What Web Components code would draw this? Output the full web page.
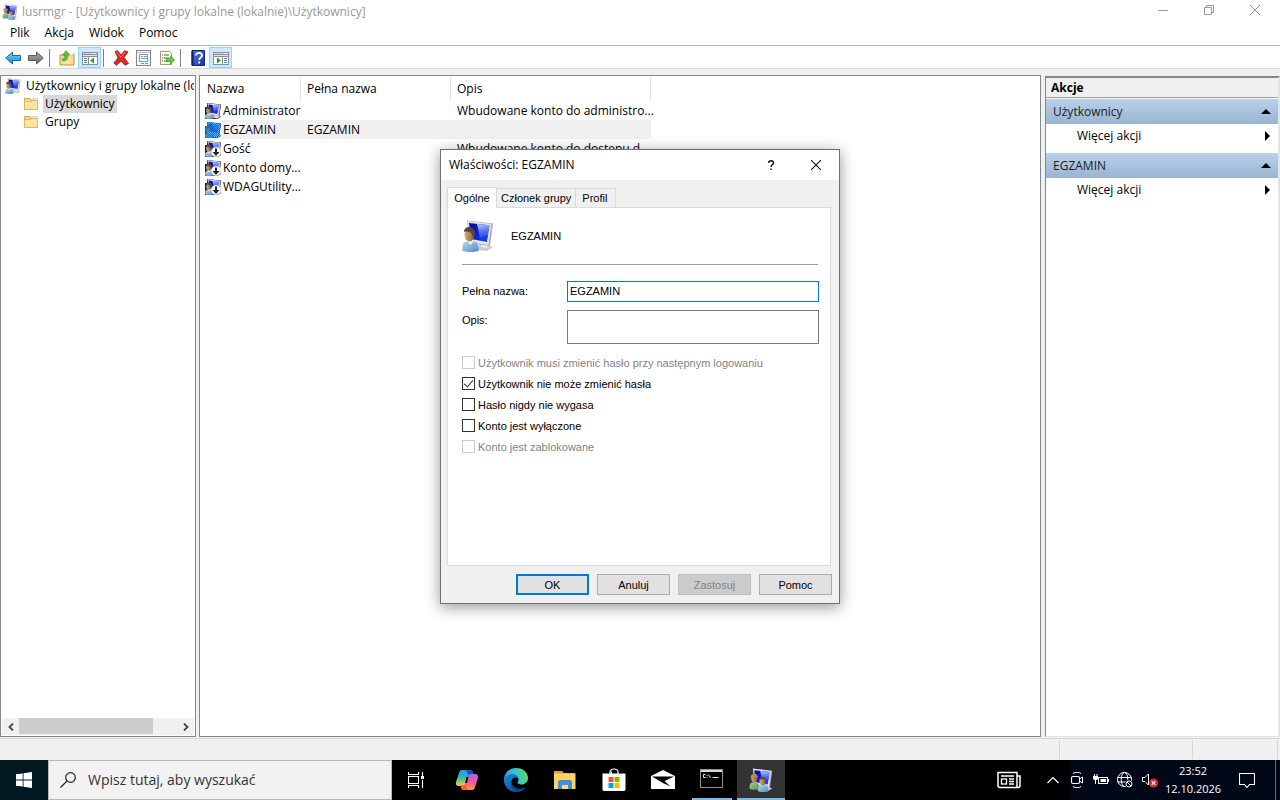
<!DOCTYPE html>
<html lang="pl">
<head>
<meta charset="utf-8">
<title>lusrmgr</title>
<style>
html, body { margin: 0; height: 100%; }
body { font: 12px/16px "Open Sans", "Noto Sans", sans-serif; color: #000; background: #f0f0f0; overflow: hidden; }
</style>
</head>
<body>
<desktop-screen></desktop-screen>
<script>
const MONITOR = `
<defs>
<linearGradient id="scr" x1="0" y1="0" x2="1" y2="1"><stop offset="0" stop-color="#0408a0"/><stop offset=".5" stop-color="#0d1fd8"/><stop offset="1" stop-color="#1c50f0"/></linearGradient>
<linearGradient id="shine" x1=".3" y1="0" x2=".5" y2="1"><stop offset="0" stop-color="#b4caff"/><stop offset="1" stop-color="#3a5cf0" stop-opacity=".5"/></linearGradient>
<linearGradient id="skin" x1="0" y1="0" x2="1" y2="0"><stop offset="0" stop-color="#dba877"/><stop offset="1" stop-color="#83603f"/></linearGradient>
<linearGradient id="shirt" x1="0" y1="0" x2="1" y2="1"><stop offset="0" stop-color="#b5dcf6"/><stop offset="1" stop-color="#5488bd"/></linearGradient>
<linearGradient id="green" x1="0" y1="0" x2="1" y2="1"><stop offset="0" stop-color="#a9d69a"/><stop offset="1" stop-color="#4d8a45"/></linearGradient>
</defs>
<path d="M17 24l8 1 6 2-6 4-9-1z" fill="#c9cbce"/><path d="M20 24l6 1-1 3-6-1z" fill="#e9eaec"/>
<path d="M5 .5l26 3-3 22.500L8 23z" fill="#a9acb2"/><path d="M5.500 1l24 3-3 21L8 22z" fill="#e2e4e8"/>
<path d="M7 3l20.500 2.300L25 22 9 19z" fill="url(#scr)"/><path d="M15 4l12.500 1.300L26 15l-8 3z" fill="url(#shine)"/>`;
const PERSON = `
<path d="M.5 31c-1-6 1-10 6-10h3c5 0 8 4 7 10-4 1.500-12 1.500-16 0z" fill="url(#shirt)"/><path d="M5 21l3.500 4 3-4-1-2H6z" fill="#f0f6fa"/>
<ellipse cx="7.500" cy="15" rx="5" ry="6.500" fill="url(#skin)"/><path d="M2 12c0-7 11.500-7 11 2l-1 5c-1.500-1-1.500-4-3-6.500C6.500 12 4 11 2 12z" fill="#57473a"/>`;
const PAIR = `
<path d="M1 28c-1-6 1-9 5-9h2c4 0 6 3 6 9-4 1.500-9 1.500-13 0z" fill="url(#green)"/><ellipse cx="7" cy="14" rx="4" ry="5" fill="url(#skin)"/><path d="M2 13c0-7 10-7 10 0-3-2-7-2-10 0z" fill="#b6923e"/>
<path d="M12 31c-1-6 2-9 6-9h2c4 0 6 3 6 9-4 1.500-10 1.500-14 0z" fill="url(#shirt)"/><ellipse cx="18" cy="18" rx="4" ry="5" fill="url(#skin)"/><path d="M13 16c0-6 10-6 10 0-3-2-6-1-10 0z" fill="#6e4527"/>`;
const SHADOW = `<path d="M4 0l28 3-3 22 3 3-7 4H0V8h4z" fill="#1b1b2b"/>`;
const PANEWIN = `<rect x="0" y="2" width="16" height="13" fill="#8a9099"/><rect x="1" y="3" width="14" height="1" fill="#cfd4da"/><rect x="11" y="3" width="3" height="1" fill="#fff"/><rect x="1" y="5" width="14" height="1" fill="#dfe3e8"/>`;
const ICONS = {
  user: [32, MONITOR + PERSON],
  group: [32, MONITOR + PAIR],
  listuser: [32, SHADOW + MONITOR + PERSON],
  disabled: [32, SHADOW + MONITOR + PERSON + `<circle cx="22" cy="22" r="10" fill="#fff" stroke="#999" stroke-width="1"/><path d="M20 15h4v7h5l-7 8-7-8h5z" fill="#222"/>`],
  selected: [32, `<defs><pattern id="dither" width="4" height="4" patternUnits="userSpaceOnUse"><path d="M0 0h2v2H0zM2 2h2v2H2z" fill="#0078d7"/></pattern></defs>` + SHADOW + MONITOR + PERSON + `<path d="M4 0l28 3-3 22 3 3-7 4H0V8h4z" fill="#1c8ae6" opacity=".45"/><path d="M4 0l28 3-3 22 3 3-7 4H0V8h4z" fill="url(#dither)"/>`],
  folder: [16, `<path d="M1 2h6l1 1.500h6.500V14H1z" fill="#d9ac4c"/><path d="M2 3h4.500l1 1.500H14V13H2z" fill="#f7d98a"/><path d="M1.500 5.500h7l1-1h5v9h-13z" fill="#fbe3a2" stroke="#dcb45c" stroke-width=".8"/><path d="M10 2.500h4.500v2H10z" fill="#eef4fa" stroke="#c9a557" stroke-width=".5"/>`],
  back: [16, `<defs><linearGradient id="bk" x1="0" y1="0" x2="0" y2="1"><stop offset="0" stop-color="#7fd6f8"/><stop offset="1" stop-color="#1187d4"/></linearGradient></defs><path d="M.7 8L7.500 2v3.500h8v5h-8V14z" fill="url(#bk)" stroke="#1b6aa8" stroke-width="1"/>`],
  forward: [16, `<defs><linearGradient id="fw" x1="0" y1="0" x2="0" y2="1"><stop offset="0" stop-color="#aaa"/><stop offset="1" stop-color="#6c6c6c"/></linearGradient></defs><path d="M15.300 8L8.500 2v3.500h-8v5h8V14z" fill="url(#fw)" stroke="#5c5c5c" stroke-width="1"/>`],
  up: [16, `<path d="M1 5h6l1-1h7v11H1z" fill="#f3d283" stroke="#c9983a"/><path d="M2 7h12v7H2z" fill="#fbe09a"/><path d="M10 3h4v2h-4z" fill="#eef"/><path d="M4 11c4 0 5-3 4.500-6h2L7 .7 3.500 5H5.800c.2 3-.8 4-2.800 4z" fill="#57c82e" stroke="#2c8a14" stroke-width=".6"/>`],
  panetree: [16, PANEWIN + `<rect x="1" y="7" width="5" height="7" fill="#fff"/><rect x="7" y="7" width="8" height="7" fill="#fff"/><path d="M2 8h3v1H2zM2 10h3v1H2zM2 12h3v1H2z" fill="#4a7fb5"/><path d="M8 10.500L12 7.500v6z" fill="#24a51c"/>`],
  paneact: [16, PANEWIN + `<rect x="10" y="7" width="5" height="7" fill="#fff"/><rect x="1" y="7" width="8" height="7" fill="#fff"/><path d="M11 8h3v1h-3zM11 10h3v1h-3zM11 12h3v1h-3z" fill="#4a7fb5"/><path d="M8 10.500L4 7.500v6z" fill="#24a51c"/>`],
  remove: [16, `<path d="M2 1.500l2.500-.8L8 5l3.500-4.300L15 2l-4 5.500 4.500 6-3.500 1.800L8 11l-4.500 4.300L.8 13 5 8z" fill="#e02727" stroke="#a80f12" stroke-width=".8"/><path d="M3 2.200l5 5 4-5" fill="none" stroke="#f58a83" stroke-width=".9"/>`],
  props: [16, `<rect x=".5" y=".5" width="14" height="15" fill="#f4f6f8" stroke="#7f8790"/><path d="M1 2.500h13" stroke="#b9c0c8"/><rect x="3.500" y="4.500" width="8" height="7" fill="#fff" stroke="#8b98a6"/><path d="M5 6.500h2M8 6.500h3M5 8.500h6" stroke="#48b4de"/><path d="M5 13.500h3M9 13.500h3" stroke="#3aa9dc"/>`],
  export: [16, `<path d="M1.500 1.500h9l2 2v11h-11z" fill="#fffbe8" stroke="#a59c74"/><path d="M3 5h1M5 5h5M3 8h1M5 8h5M3 11h1M5 11h4" stroke="#555"/><path d="M7.500 8.500h4V6l4.300 4-4.300 4v-2.500h-4z" fill="#62cd3d" stroke="#2f9418" stroke-width=".6"/>`],
  help: [16, `<defs><linearGradient id="hp" x1="0" y1="0" x2="1" y2="1"><stop offset="0" stop-color="#5577dd"/><stop offset="1" stop-color="#1b35a5"/></linearGradient></defs><path d="M2 .5h12.500v15H2z" fill="url(#hp)" stroke="#14267c"/><path d="M2.500 1v14" stroke="#0f2071" stroke-width="2"/><path d="M6 5.500c0-3.500 6-3.500 6 0 0 2.200-2.800 2-2.800 4.500M9.200 11.500v2" fill="none" stroke="#fff" stroke-width="1.800"/>`],
  min: [10, `<path d="M0 5.500h10" stroke="#999"/>`],
  max: [10, `<path d="M.5 2.500h7v7h-7zM2.500 2.500v-2h7v7h-2" fill="none" stroke="#999"/>`],
  close: [10, `<path d="M0 0l10 10M10 0L0 10" stroke="#999"/>`],
  dlgclose: [10, `<path d="M0 0l10 10M10 0L0 10" stroke="#111" stroke-width="1.100"/>`],
  dlghelp: [10, `<path d="M2.500 3c0-3 5-3 5 0 0 1.800-2.500 1.800-2.500 4M5 8.500v1.500" fill="none" stroke="#111" stroke-width="1.400"/>`],
  left: [8, `<path d="M6 .5L2.500 4 6 7.500" fill="none" stroke="#444" stroke-width="1.800"/>`],
  right: [8, `<path d="M2 .5L5.500 4 2 7.500" fill="none" stroke="#444" stroke-width="1.800"/>`],
  tri: [10, `<path d="M5 2l5 5H0z"/>`],
  arrow: [10, `<path d="M3 0l5 5-5 5z"/>`],
  windows: [16, `<path d="M0 2.300L6.700 1.400v6.200H0zM7.500 1.300L16 0v7.600H7.500zM0 8.400h6.700v6.200L0 13.700zM7.500 8.400H16V16l-8.500-1.300z" fill="#fff"/>`],
  search: [16, `<circle cx="10.500" cy="5.500" r="4.800" fill="none" stroke="#222" stroke-width="1.200"/><path d="M7 9L.5 15.500" stroke="#222" stroke-width="1.300"/>`],
  taskview: [16, `<path d="M.5 0v2.500h10V0M.5 16v-2.500h10V16M.5 4.500h10v7H.5zM14.500 0v4M14.500 8v8" fill="none" stroke="#fff" stroke-width="1.100"/><rect x="13" y="4" width="3" height="3" fill="#fff"/>`],
  copilot: [24, `<defs><linearGradient id="c1" x1="0" y1="0" x2="0" y2="1"><stop offset="0" stop-color="#1f9df0"/><stop offset=".5" stop-color="#35b9a0"/><stop offset="1" stop-color="#ffd02b"/></linearGradient><linearGradient id="c2" x1="0" y1="0" x2="0" y2="1"><stop offset="0" stop-color="#b45ce8"/><stop offset=".5" stop-color="#ef5a9b"/><stop offset="1" stop-color="#ff9a4a"/></linearGradient></defs>
<path d="M7 2h8c2 0 2.500 1 3 3l.5 2h-3c-2 0-2.500 1-3 3l-1.500 5c-.6 2-1 3-3 3H4c-3 0-3.500-2-2.700-5L4 5c.6-2 1-3 3-3z" fill="url(#c1)"/><path d="M11 2h4c2 0 2.500 1 3 3l.5 2h-3c-2 0-2.500 0-3-2z" fill="#154fc4"/>
<path d="M17 22H9c-2 0-2.500-1-3-3l-.5-2h3c2 0 2.500-1 3-3L13 9c.6-2 1-3 3-3h4c3 0 3.500 2 2.700 5L20 19c-.6 2-1 3-3 3z" fill="url(#c2)"/><path d="M13 22H9c-2 0-2.500-1-3-3l-.5-2h3c2 0 2.500 0 3 2z" fill="#f2662f"/><path d="M11.500 9h2l-1.500 6h-2z" fill="#111"/>`],
  edge: [24, `<defs><linearGradient id="e1" x1="0" y1=".5" x2="1" y2=".3"><stop offset="0" stop-color="#2ba7ea"/><stop offset=".5" stop-color="#31c3d0"/><stop offset="1" stop-color="#66dd50"/></linearGradient><linearGradient id="e2" x1="0" y1="0" x2=".6" y2="1"><stop offset="0" stop-color="#1684d8"/><stop offset="1" stop-color="#0c59a4"/></linearGradient></defs>
<path d="M0 12C0 5 5.500 0 12 0c7.500 0 12 5 12 10 0 4-3 6.500-6.500 6.500-2.500 0-4-1-4-2 0-.8 1-1.200 1-3C14.500 9 12 7 9 7c-5 0-9 3-9 7z" fill="url(#e1)"/><path d="M0 12c.5-4 4.500-6 8.500-6 3.500 0 6 2.500 6 5.300-.5-1-1.500-1.800-3-1.800-3 0-4 2.500-4 4.500 0 4 4 7 8 7 3 0 5-1 6.500-2C20 22 16 24 12 24 5 24 0 18.500 0 12z" fill="url(#e2)"/><path d="M7.500 14c0 4 4 7 8 7 3 0 5-1 6.500-2-2 3-5 4.600-8.500 5C9 23 5 18 7.500 14z" fill="#0a4788"/>`],
  explorer: [24, `<path d="M1 3h8l2 2h11v16H1z" fill="#e39e1c"/><path d="M1 5.500h21.500V21H1z" fill="#ffd265"/><path d="M5 21v-7c0-1 1-2 2-2h10c1 0 2 1 2 2v7h-4v-4H9v4z" fill="#3e91d8"/><path d="M9 17h6v4H9z" fill="#ffda79"/>`],
  store: [24, `<path d="M8 6V4c0-4 8-4 8 0v2M9.500 6V3.500" fill="none" stroke="#fff" stroke-width="1.200"/><path d="M.5 5.500h23V21c0 1.500-.8 2-2 2h-19c-1.200 0-2-.5-2-2z" fill="#fff"/><path d="M6.500 9H11.500v5h-5z" fill="#f25022"/><path d="M12.500 9h5v5h-5z" fill="#7fba00"/><path d="M6.500 15h5v5h-5z" fill="#00a4ef"/><path d="M12.500 15h5v5h-5z" fill="#ffb900"/>`],
  mail: [24, `<path d="M0 8l12-6 12 6v13H0z" fill="#fff"/><path d="M1 8.500h22L13.500 13l6 5.500L12 15z" fill="#000"/>`],
  console: [24, `<rect x=".5" y="2.500" width="22" height="18" fill="#000" stroke="#909090"/><path d="M1 4h21" stroke="#d8d8d8" stroke-width="2"/><path d="M5.500 7.500H3.500v3h2M7 8v.8M7 10v.8M8.500 7.500l2 3.500M12.500 10.500h6" fill="none" stroke="#ddd" stroke-width="1"/>`],
  news: [24, `<path d="M1 4.500h19v15H3c-1.200 0-2-.8-2-2zM20 8h3v9.500c0 1.200-.8 2-2 2H4" fill="none" stroke="#fff" stroke-width="1.500"/><path d="M4 8h13M12 11h5M12 13.500h5M12 16h5" stroke="#fff" stroke-width="1.300"/><rect x="4.500" y="11" width="5" height="5" fill="none" stroke="#fff" stroke-width="1.300"/>`],
  chevron: [12, `<path d="M.5 9L6 3.500 11.500 9" fill="none" stroke="#fff" stroke-width="1.200"/>`],
  meet: [16, `<rect x="2.500" y="4.500" width="8" height="7" rx="1.500" fill="none" stroke="#fff" stroke-width="1.100"/><path d="M10.500 7l3-2v6l-3-2M4 1.500C7-.2 10 0 12 1.500M4 14.500c3 1.700 6 1.500 8 0" fill="none" stroke="#fff"/>`],
  battery: [16, `<rect x="5.500" y="5.500" width="9" height="6" fill="none" stroke="#fff"/><path d="M7.500 7h5.500v3H7.500zM14.500 7H16v3h-1.500zM0 4h5v2c0 1.500-.8 2-2 2v4h-1V8C.8 8 0 7.500 0 6zM1 2h1v2H1zM3.500 2h1v2h-1z" fill="#fff"/>`],
  globe: [16, `<circle cx="7.500" cy="7.500" r="7" fill="none" stroke="#fff"/><ellipse cx="7.500" cy="7.500" rx="3.300" ry="7" fill="none" stroke="#fff"/><path d="M.5 5.500h14M.5 10h14" stroke="#fff"/><circle cx="12" cy="12" r="4" fill="#000818"/><circle cx="12" cy="12" r="3" fill="none" stroke="#fff"/><path d="M10 10l4 4" stroke="#fff"/>`],
  volume: [16, `<path d="M.5 5.500H3L6.500 2v11L3 9.500H.5z" fill="none" stroke="#fff"/><circle cx="11.500" cy="11" r="4.500" fill="#e0262e"/><path d="M9.700 9.200l3.600 3.600m0-3.600l-3.600 3.600" stroke="#fff" stroke-width="1.200"/>`],
  notice: [16, `<path d="M.5 1.500h15v11h-5L8 15.500 5.500 12.500h-5z" fill="none" stroke="#fff" stroke-width="1.100"/>`]
};

/* Base class: renders the subclass's CSS and markup into an open shadow root. */
class Part extends HTMLElement {
  constructor() { super(); this.attachShadow({ mode: 'open' }); }
  connectedCallback() {
    this.shadowRoot.innerHTML = `<style>*{box-sizing:border-box}button{font:inherit;color:inherit;background:none;border:0;margin:0;padding:0}${this.css()}</style>${this.markup()}`;
  }
  css() { return ''; }
  markup() { return '<slot></slot>'; }
}
const define = (name, css, markup) => customElements.define(name, class extends Part {
  css() { return css; }
  markup() { return typeof markup === 'function' ? markup(this) : markup; }
});

define('ui-icon', `:host{display:inline-flex;flex:none}svg{display:block}`, el => {
  const [box, art] = ICONS[el.getAttribute('name')];
  const size = el.getAttribute('size') || box;
  return `<svg width="${size}" height="${size}" viewBox="0 0 ${box} ${box}" aria-hidden="true">${art}</svg>`;
});

define('title-bar', `
:host{display:flex;align-items:center;height:24px;background:#fff;color:#999;padding:0 2px;gap:4px;box-sizing:border-box}
h1{flex:1;font:inherit;margin:0;white-space:nowrap}
button{width:46px;height:20px;display:flex;justify-content:center;align-items:flex-start;padding-top:3px}
.controls{display:flex}`, `
<ui-icon name="group" size="16"></ui-icon><h1><slot></slot></h1>
<div class="controls"><button aria-label="Minimalizuj"><ui-icon name="min"></ui-icon></button><button aria-label="Przywróć"><ui-icon name="max"></ui-icon></button><button aria-label="Zamknij"><ui-icon name="close"></ui-icon></button></div>`);

define('menu-bar', `
:host{display:flex;align-items:flex-start;height:22px;box-sizing:border-box;background:#fff;border-bottom:1px solid #b4b4bc;padding:1px 0 0 10px;gap:15px}`, `
<button>Plik</button><button>Akcja</button><button>Widok</button><button>Pomoc</button>`);

define('tool-bar', `
:host{display:flex;align-items:flex-end;height:23px;box-sizing:border-box;background:#fff;border-bottom:1px solid #d8d8d8;padding-left:1px}
button{width:23px;height:21px;display:flex;justify-content:center;align-items:center}
button[aria-pressed]{background:#cce8ff;border:1px solid #99d1ff}
i{width:8px;padding:0 0 1px 2px}i::before{content:"";display:block;width:1px;height:18px;background:#808080}`, `
<button aria-label="Wstecz"><ui-icon name="back"></ui-icon></button><button aria-label="Dalej"><ui-icon name="forward"></ui-icon></button><i></i>
<button aria-label="W górę"><ui-icon name="up"></ui-icon></button><button aria-label="Drzewo konsoli" aria-pressed="true"><ui-icon name="panetree"></ui-icon></button><i></i>
<button aria-label="Usuń"><ui-icon name="remove"></ui-icon></button><button aria-label="Właściwości"><ui-icon name="props"></ui-icon></button><button aria-label="Eksportuj listę"><ui-icon name="export"></ui-icon></button><i></i>
<button aria-label="Pomoc"><ui-icon name="help"></ui-icon></button><button aria-label="Okienko akcji" aria-pressed="true"><ui-icon name="paneact"></ui-icon></button>`);

define('tree-item', `
:host{display:flex;align-items:center;height:18px;white-space:nowrap;gap:3px;padding-left:3px}
:host([level="2"]){padding-left:21px;gap:4px}
span{padding:0 2px;line-height:18px}
:host([selected]) span{background:#d9d9d9}`, el => `<ui-icon name="${el.getAttribute('icon')}" size="16"></ui-icon><span><slot></slot></span>`);

define('tree-pane', `
:host{display:flex;flex-direction:column;background:#fff;border:1px solid #828790;padding:1px;overflow:hidden;min-width:0}
.items{flex:1;overflow:hidden}
.bar{display:flex;height:17px;background:#f0f0f0}
.bar button{width:17px;display:flex;align-items:center;justify-content:center}
.track{flex:1;display:flex}.thumb{width:85%;background:#cdcdcd;margin-bottom:1px}`, `
<div class="items" role="tree">
<tree-item icon="user" role="treeitem">Użytkownicy i grupy lokalne (lok</tree-item>
<tree-item icon="folder" level="2" selected role="treeitem">Użytkownicy</tree-item>
<tree-item icon="folder" level="2" role="treeitem">Grupy</tree-item></div>
<div class="bar"><button aria-label="Przewiń w lewo"><ui-icon name="left"></ui-icon></button><div class="track"><div class="thumb"></div></div><button aria-label="Przewiń w prawo"><ui-icon name="right"></ui-icon></button></div>`);

const USERS = [
  ['listuser', 'Administrator', '', 'Wbudowane konto do administro...'],
  ['selected', 'EGZAMIN', 'EGZAMIN', ''],
  ['disabled', 'Gość', '', 'Wbudowane konto do dostępu d...'],
  ['disabled', 'Konto domy...', '', ''],
  ['disabled', 'WDAGUtility...', '', '']
];
define('user-list', `
:host{display:block;background:#fff;border:1px solid #828790;padding-top:1px;min-width:0;overflow:hidden;margin-right:1px}
table{border-collapse:collapse;table-layout:fixed;width:451px}
.c1{width:101px}.c2{width:150px}.c3{width:200px}
th,td{font-weight:400;text-align:left;padding:0 0 0 6px;white-space:nowrap}
th{height:24px;box-shadow:inset -1px 0 #e5e5e5}
td{height:19px}
th:first-child{padding-left:7px}
td:first-child{padding-left:5px}
.name{display:flex;align-items:center}
.name span{line-height:19px;padding-left:2px;flex:1}
.sel td+td,.sel span{background:#f0f0f0}`, () => `
<table><colgroup><col class="c1"><col class="c2"><col class="c3"></colgroup>
<thead><tr><th>Nazwa</th><th>Pełna nazwa</th><th>Opis</th></tr></thead>
<tbody>${USERS.map(u => `<tr${u[0] === 'selected' ? ' class="sel"' : ''}><td><div class="name"><ui-icon name="${u[0]}" size="16"></ui-icon><span>${u[1]}</span></div></td><td>${u[2]}</td><td>${u[3]}</td></tr>`).join('')}</tbody></table>`);

define('action-group', `
:host{display:block;padding-bottom:5px}
button{display:flex;width:100%;align-items:center;justify-content:space-between;height:24px;padding:0 6px 0 31px}
.head{height:25px;background:linear-gradient(#b9d1ea,#99b4d1);padding:0 7px;color:#1e1e1e}`, `
<button class="head"><slot></slot><ui-icon name="tri"></ui-icon></button>
<button>Więcej akcji<ui-icon name="arrow"></ui-icon></button>`);

define('actions-pane', `
:host{display:block;background:#fff;border:solid;border-width:2px 2px 1px;border-color:#868686 #e3e3e3 #e3e3e3 #868686;border-left-width:1px;margin-top:1px}
h2{margin:0 0 1px;font:inherit;font-weight:700;line-height:19px;padding:0 5px;background:#f0f0f0;border-bottom:1px solid #a0a0a0}`, `
<h2>Akcje</h2><action-group>Użytkownicy</action-group><action-group>EGZAMIN</action-group>`);

define('status-bar', `
:host{display:flex;height:22px;box-sizing:border-box;border-top:1px solid #d7d7d7;padding:1px 2px 1px 0}
span{border-right:1px solid #d7d7d7}.a{flex:1}.b{width:133px}.c{width:85px}`, `<span class="a"></span><span class="b"></span><span class="c"></span>`);

define('check-row', `
:host{display:block}
label{display:flex;align-items:center;gap:3px;height:21px;color:#000}
:host([disabled]) label{color:#838383}
input{appearance:none;margin:0;width:13px;height:13px;border:1px solid #333;background:#fff;display:grid;place-items:start center}
input:disabled{border-color:#ccc}
input:checked::before{content:"";width:4px;height:8px;border:solid #333;border-width:0 1px 1px 0;transform:rotate(40deg)}`,
el => `<label><input type="checkbox"${el.hasAttribute('checked') ? ' checked' : ''}${el.hasAttribute('disabled') ? ' disabled' : ''}><span><slot></slot></span></label>`);

define('property-dialog', `
:host{display:flex;flex-direction:column;box-sizing:border-box;width:400px;max-width:100%;background:#f0f0f0;border:1px solid #707070;box-shadow:0 3px 14px rgba(0,0,0,.42);font:11px/14px "Liberation Sans",Arial,sans-serif}
header{display:flex;align-items:center;height:30px;background:#fff;padding:0 1px 0 8px}
h2{font:12px/16px "Open Sans",sans-serif;margin:0;flex:1}
header button{width:45px;height:28px;display:flex;align-items:center;justify-content:center}
.tabs{display:flex;align-items:flex-end;padding:7px 6px 0;height:27px}
.tabs button{height:19px;padding:0 4px;border:1px solid #d9d9d9;border-left:0;border-bottom:0}
.tabs .profile{width:40px;padding-right:6px}
.tabs [aria-selected=true]{width:50px;height:21px;background:#fff;border-left:1px solid #d9d9d9;padding:0 0 1px;margin-bottom:-1px;position:relative}
.panel{background:#fff;border:1px solid #dcdcdc;margin:0 8px 0 6px;padding:12px 11px 0 14px;height:359px}
.who{display:flex;align-items:center;gap:17px;height:45px;padding-bottom:13px;border-bottom:1px solid #a0a0a0;margin:0 1px 16px 0}
.field{display:grid;grid-template-columns:105px 1fr;align-items:start;margin-bottom:8px}
.field label{padding-top:3px}
input,textarea{font:inherit;width:100%;border:1px solid #7a7a7a;border-radius:0;padding:0 2px;margin:0;resize:none;display:block;outline:0}
input[type=text]{height:21px;border:1px solid #0078d7;padding-bottom:1px}textarea{height:34px}
footer{display:flex;justify-content:flex-end;gap:8px;padding:8px 7px}
footer button{width:73px;height:21px;background:#e1e1e1;border:1px solid #adadad}
footer .ok{border:2px solid #0078d7}
footer button:disabled{background:#ccc;border-color:#bfbfbf;color:#838383}`, `
<header><h2>Właściwości: EGZAMIN</h2><button aria-label="Pomoc"><ui-icon name="dlghelp"></ui-icon></button><button aria-label="Zamknij"><ui-icon name="dlgclose"></ui-icon></button></header>
<div class="tabs" role="tablist"><button role="tab" aria-selected="true">Ogólne</button><button role="tab">Członek grupy</button><button role="tab" class="profile">Profil</button></div>
<div class="panel" role="tabpanel">
<div class="who"><ui-icon name="user" size="32"></ui-icon><span>EGZAMIN</span></div>
<div class="field"><label for="full">Pełna nazwa:</label><input id="full" type="text" value="EGZAMIN"></div>
<div class="field"><label for="desc">Opis:</label><textarea id="desc"></textarea></div>
<div class="checks">
<check-row disabled>Użytkownik musi zmienić hasło przy następnym logowaniu</check-row>
<check-row checked>Użytkownik nie może zmienić hasła</check-row>
<check-row>Hasło nigdy nie wygasa</check-row>
<check-row>Konto jest wyłączone</check-row>
<check-row disabled>Konto jest zablokowane</check-row></div></div>
<footer><button class="ok">OK</button><button>Anuluj</button><button disabled>Zastosuj</button><button>Pomoc</button></footer>`);

define('task-bar', `
:host{display:flex;height:40px;background:#000;color:#fff}
button{width:48px;height:40px;display:flex;align-items:center;justify-content:center;flex:none}
.start{background:#001820}
.search{display:flex;align-items:center;gap:12px;width:344px;background:#f2f2f2;border:1px solid #b8b8b8;padding-left:11px;color:#333}
input{font:14px/20px "Open Sans",sans-serif;border:0;padding:0;background:none;flex:1;min-width:0}
input::placeholder{color:#333;opacity:1}
.apps{flex:1;display:flex;gap:1px;padding-left:3px}
.running{width:40px;margin:0 4px;border-bottom:2px solid #76b9ed}
.active{background:#333;border-bottom:2px solid #76b9ed;padding-top:2px}
.chev{width:32px;padding-left:8px}
.tray{display:flex;align-items:center;background:linear-gradient(90deg,#000 5px,#000818 5px)}
.tray button{width:24px}.tray .vol{width:26px}.tray .notice{width:52px;padding-right:4px}
.clock{width:60px;text-align:center;font-size:11px;line-height:18px}
.peek{width:5px;height:40px;border-left:1px solid #6c6f78}`, `
<button class="start" aria-label="Start"><ui-icon name="windows"></ui-icon></button>
<label class="search"><ui-icon name="search"></ui-icon><input type="text" placeholder="Wpisz tutaj, aby wyszukać"></label>
<button aria-label="Widok zadań"><ui-icon name="taskview"></ui-icon></button>
<div class="apps">
<button aria-label="Copilot"><ui-icon name="copilot"></ui-icon></button><button aria-label="Edge"><ui-icon name="edge"></ui-icon></button><button aria-label="Eksplorator plików"><ui-icon name="explorer"></ui-icon></button><button aria-label="Store"><ui-icon name="store"></ui-icon></button><button aria-label="Poczta"><ui-icon name="mail"></ui-icon></button><button class="running" aria-label="Wiersz polecenia"><ui-icon name="console"></ui-icon></button><button class="active" aria-label="lusrmgr"><ui-icon name="group" size="24"></ui-icon></button></div>
<button aria-label="Wiadomości"><ui-icon name="news"></ui-icon></button>
<button class="chev" aria-label="Pokaż ukryte ikony"><ui-icon name="chevron"></ui-icon></button>
<div class="tray"><button aria-label="Kamera"><ui-icon name="meet"></ui-icon></button><button aria-label="Bateria"><ui-icon name="battery"></ui-icon></button><button aria-label="Sieć"><ui-icon name="globe"></ui-icon></button><button class="vol" aria-label="Głośność"><ui-icon name="volume"></ui-icon></button>
<div class="clock"><div>23:52</div><div>12.10.2026</div></div>
<button class="notice" aria-label="Powiadomienia"><ui-icon name="notice"></ui-icon></button><div class="peek"></div></div>`);

define('desktop-screen', `
:host{display:flex;flex-direction:column;height:100vh;position:relative}
main{flex:1;min-height:0;display:grid;grid-template-columns:196px minmax(0,1fr) 235px;gap:3px;padding:6px 0 1px}
.modal{position:absolute;inset:149px 0 auto;display:flex;justify-content:center}`, `
<title-bar>lusrmgr - [Użytkownicy i grupy lokalne (lokalnie)\\Użytkownicy]</title-bar>
<menu-bar></menu-bar><tool-bar></tool-bar>
<main><tree-pane></tree-pane><user-list></user-list><actions-pane></actions-pane></main>
<status-bar></status-bar><task-bar></task-bar>
<div class="modal"><property-dialog role="dialog" aria-label="Właściwości: EGZAMIN"></property-dialog></div>`);
</script>
</body>
</html>
